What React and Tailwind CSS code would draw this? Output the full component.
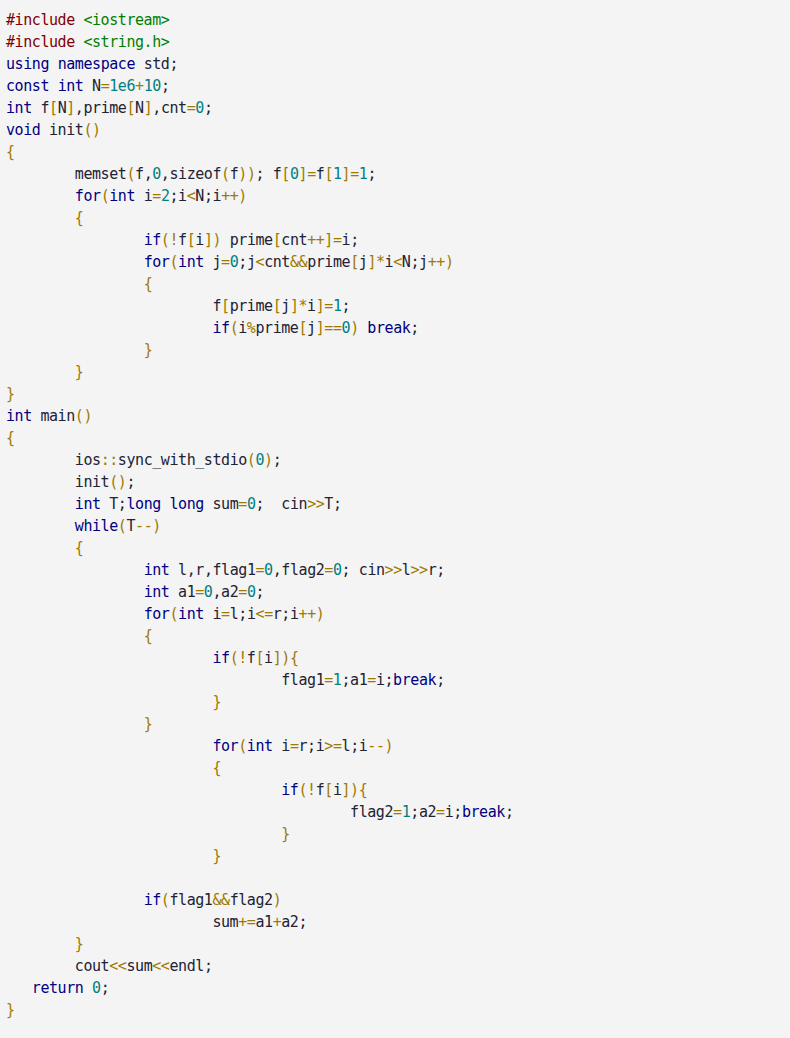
const source = `#include <iostream>
#include <string.h>
using namespace std;
const int N=1e6+10;
int f[N],prime[N],cnt=0;
void init()
{
\tmemset(f,0,sizeof(f)); f[0]=f[1]=1;
\tfor(int i=2;i<N;i++)
\t{
\t\tif(!f[i]) prime[cnt++]=i;
\t\tfor(int j=0;j<cnt&&prime[j]*i<N;j++)
\t\t{
\t\t\tf[prime[j]*i]=1;
\t\t\tif(i%prime[j]==0) break;
\t\t}
\t}
}
int main()
{
\tios::sync_with_stdio(0);
\tinit();
\tint T;long long sum=0;  cin>>T;
\twhile(T--)
\t{
\t\tint l,r,flag1=0,flag2=0; cin>>l>>r;
\t\tint a1=0,a2=0;
\t\tfor(int i=l;i<=r;i++)
\t\t{
\t\t\tif(!f[i]){
\t\t\t\tflag1=1;a1=i;break;
\t\t\t}
\t\t}
\t\t\tfor(int i=r;i>=l;i--)
\t\t\t{
\t\t\t\tif(!f[i]){
\t\t\t\t\tflag2=1;a2=i;break;
\t\t\t\t}
\t\t\t}
\t\t
\t\tif(flag1&&flag2)
\t\t\tsum+=a1+a2;
\t}
\tcout<<sum<<endl;
   return 0;
}`

const keywords = new Set([
  'using', 'namespace', 'const', 'int', 'void', 'for', 'if', 'while',
  'long', 'return', 'break',
])

const colors = {
  kw: 'text-[#000080]',
  pre: 'text-[#800000]',
  str: 'text-[#008000]',
  num: 'text-[#008080]',
  id: 'text-[#222233]',
  op: 'text-[#a07a00]',
  sep: 'text-[#222233]',
}

function tokenize(line) {
  const out = []
  if (line.startsWith('#include')) {
    out.push({ t: '#include', c: 'pre' })
    out.push({ t: line.slice(8), c: 'str' })
    return out
  }
  const re = /([A-Za-z_]\w*)|(\d+e\d+|\d+)|(\s+)|([,;])|(.)/g
  let m
  while ((m = re.exec(line))) {
    if (m[1]) out.push({ t: m[1], c: keywords.has(m[1]) ? 'kw' : 'id' })
    else if (m[2]) out.push({ t: m[2], c: 'num' })
    else if (m[3]) out.push({ t: m[3], c: 'id' })
    else if (m[4]) out.push({ t: m[4], c: 'sep' })
    else out.push({ t: m[5], c: 'op' })
  }
  return out
}

const lines = source.split('\n').map((l) => l.replace(/\t/g, '        '))

export default function App() {
  return (
    <div className="min-h-screen w-full bg-[#f4f4f4] pt-[9px] pb-4 pl-[6px]">
      <pre className="m-0 font-['DejaVu_Sans_Mono',monospace] text-[15px] tracking-[-0.43px] leading-[22px] whitespace-pre">
        {lines.map((line, i) => (
          <div key={i} className="h-[22px]">
            {tokenize(line).map((tok, j) => (
              <span key={j} className={colors[tok.c]}>
                {tok.t}
              </span>
            ))}
          </div>
        ))}
      </pre>
    </div>
  )
}
